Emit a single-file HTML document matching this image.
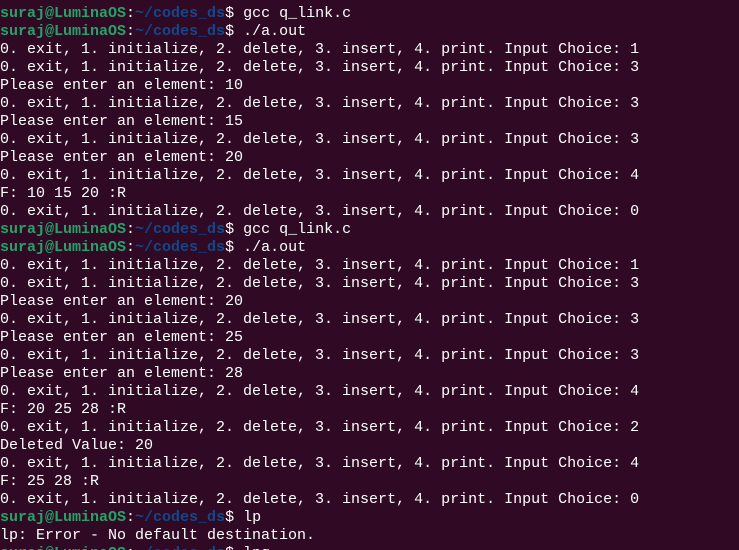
<!DOCTYPE html>
<html><head><meta charset="utf-8"><style>
html,body{margin:0;padding:0;background:#300a24;width:739px;height:550px;overflow:hidden;position:relative}
pre{margin:0;position:absolute;left:0;top:5px;font-family:"Liberation Mono","DejaVu Sans Mono",monospace;font-size:15px;line-height:18px;color:#ffffff;white-space:pre}
.g{color:#26a269;font-weight:bold}.b{color:#12488b;font-weight:bold}
</style></head><body><pre><span class="g">suraj@LuminaOS</span>:<span class="b">~/codes_ds</span>$ gcc q_link.c
<span class="g">suraj@LuminaOS</span>:<span class="b">~/codes_ds</span>$ ./a.out
0. exit, 1. initialize, 2. delete, 3. insert, 4. print. Input Choice: 1
0. exit, 1. initialize, 2. delete, 3. insert, 4. print. Input Choice: 3
Please enter an element: 10
0. exit, 1. initialize, 2. delete, 3. insert, 4. print. Input Choice: 3
Please enter an element: 15
0. exit, 1. initialize, 2. delete, 3. insert, 4. print. Input Choice: 3
Please enter an element: 20
0. exit, 1. initialize, 2. delete, 3. insert, 4. print. Input Choice: 4
F: 10 15 20 :R
0. exit, 1. initialize, 2. delete, 3. insert, 4. print. Input Choice: 0
<span class="g">suraj@LuminaOS</span>:<span class="b">~/codes_ds</span>$ gcc q_link.c
<span class="g">suraj@LuminaOS</span>:<span class="b">~/codes_ds</span>$ ./a.out
0. exit, 1. initialize, 2. delete, 3. insert, 4. print. Input Choice: 1
0. exit, 1. initialize, 2. delete, 3. insert, 4. print. Input Choice: 3
Please enter an element: 20
0. exit, 1. initialize, 2. delete, 3. insert, 4. print. Input Choice: 3
Please enter an element: 25
0. exit, 1. initialize, 2. delete, 3. insert, 4. print. Input Choice: 3
Please enter an element: 28
0. exit, 1. initialize, 2. delete, 3. insert, 4. print. Input Choice: 4
F: 20 25 28 :R
0. exit, 1. initialize, 2. delete, 3. insert, 4. print. Input Choice: 2
Deleted Value: 20
0. exit, 1. initialize, 2. delete, 3. insert, 4. print. Input Choice: 4
F: 25 28 :R
0. exit, 1. initialize, 2. delete, 3. insert, 4. print. Input Choice: 0
<span class="g">suraj@LuminaOS</span>:<span class="b">~/codes_ds</span>$ lp
lp: Error - No default destination.
<span class="g">suraj@LuminaOS</span>:<span class="b">~/codes_ds</span>$ lpq
</pre></body></html>
